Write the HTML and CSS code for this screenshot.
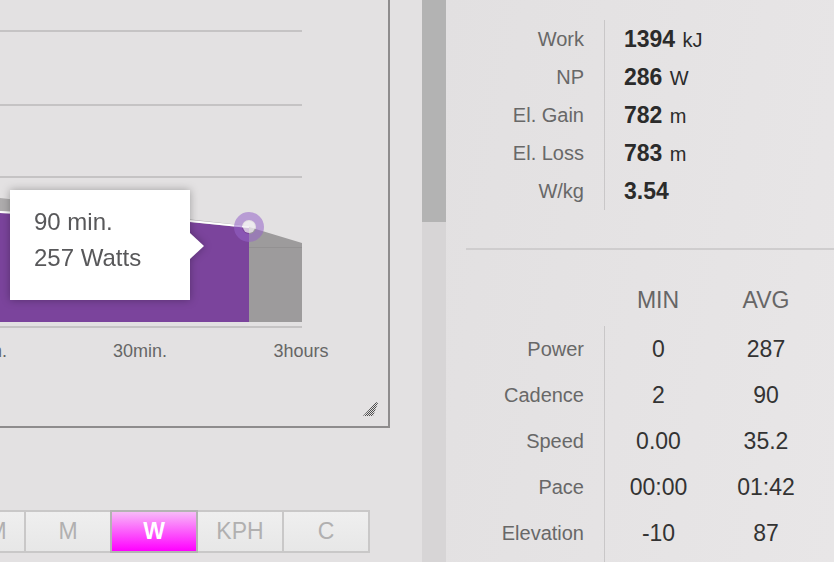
FILE: index.html
```html
<!DOCTYPE html>
<html lang="en">
<head>
  <meta charset="UTF-8">
  <title>Ride Analysis</title>
  <link rel="stylesheet" href="styles.css">
</head>
<body>

  <div class="chart-pane">
    <div class="chart-box">
      <svg class="power-curve" width="388" height="370" viewBox="0 0 388 370">
        <rect class="grid-line" x="0" y="30" width="302" height="2"/>
        <rect class="grid-line" x="0" y="104" width="302" height="2"/>
        <rect class="grid-line" x="0" y="176" width="302" height="2"/>

        <polygon points="0,198 249,226 249,228 0,213" fill="#aeacad"/>
        <polygon points="249,227 302,243 302,322 249,322" fill="#9d9b9c"/>
        <rect x="249" y="247" width="53" height="1" fill="#939192"/>
        <polygon points="0,213 190,222 249,228 249,322 0,322" fill="#7b449c"/>
        <polyline points="0,212 190,221 249,227" fill="none" stroke="#fff" stroke-width="2"/>

        <circle cx="249" cy="227" r="11" fill="none" stroke="rgba(150,100,200,0.55)" stroke-width="8"/>
        <circle cx="249" cy="227" r="6" fill="rgba(240,236,242,0.75)"/>

        <rect class="grid-line" x="0" y="326" width="302" height="2"/>

        <text class="axis-label" x="-20" y="357" text-anchor="middle">10min.</text>
        <text class="axis-label" x="140" y="357" text-anchor="middle">30min.</text>
        <text class="axis-label" x="301" y="357" text-anchor="middle">3hours</text>
      </svg>

      <div class="chart-tooltip">
        <div>90 min.</div>
        <div>257 Watts</div>
      </div>

      <svg class="resize-grip" width="16" height="16" viewBox="0 0 16 16">
        <defs>
          <pattern id="grip-dots" width="2" height="2" patternUnits="userSpaceOnUse">
            <rect width="1" height="1" fill="#4d4d4d"/>
            <rect x="1" y="1" width="1" height="1" fill="#4d4d4d"/>
          </pattern>
        </defs>
        <polygon points="1,16 14,2 16,3 11,16" fill="url(#grip-dots)"/>
      </svg>
    </div>

    <div class="unit-toggle">
      <button class="unit-btn">M</button>
      <button class="unit-btn">M</button>
      <button class="unit-btn active">W</button>
      <button class="unit-btn">KPH</button>
      <button class="unit-btn">C</button>
    </div>
  </div>

  <div class="scroll-track">
    <div class="scroll-thumb"></div>
  </div>

  <div class="stats-pane">
    <div class="totals">
      <div class="stat-label">Work</div>
      <div class="stat-value">1394 <span class="stat-unit">kJ</span></div>
      <div class="stat-label">NP</div>
      <div class="stat-value">286 <span class="stat-unit">W</span></div>
      <div class="stat-label">El. Gain</div>
      <div class="stat-value">782 <span class="stat-unit">m</span></div>
      <div class="stat-label">El. Loss</div>
      <div class="stat-value">783 <span class="stat-unit">m</span></div>
      <div class="stat-label">W/kg</div>
      <div class="stat-value">3.54</div>
    </div>

    <div class="divider"></div>

    <div class="minmax">
      <div class="minmax-head"></div>
      <div class="minmax-head">MIN</div>
      <div class="minmax-head">AVG</div>

      <div class="stat-label">Power</div>
      <div class="minmax-value first">0</div>
      <div class="minmax-value">287</div>

      <div class="stat-label">Cadence</div>
      <div class="minmax-value first">2</div>
      <div class="minmax-value">90</div>

      <div class="stat-label">Speed</div>
      <div class="minmax-value first">0.00</div>
      <div class="minmax-value">35.2</div>

      <div class="stat-label">Pace</div>
      <div class="minmax-value first">00:00</div>
      <div class="minmax-value">01:42</div>

      <div class="stat-label">Elevation</div>
      <div class="minmax-value first last">-10</div>
      <div class="minmax-value">87</div>
    </div>
  </div>

</body>
</html>
```

FILE: styles.css
```css
body {
  margin: 0;
  height: 562px;
  overflow: hidden;
  display: flex;
  font-family: "Liberation Sans", Arial, sans-serif;
  background: #e3e1e2;
}

/* left side: power curve */

.chart-pane {
  width: 422px;
  flex: none;
}

.chart-box {
  position: relative;
  width: 390px;
  height: 428px;
  box-sizing: border-box;
  border-right: 2px solid #8e8c8d;
  border-bottom: 2px solid #8e8c8d;
}

.power-curve {
  display: block;
}

.grid-line {
  fill: #c5c3c4;
}

.axis-label {
  font-size: 18px;
  fill: #666;
}

.chart-tooltip {
  position: absolute;
  left: 10px;
  top: 190px;
  width: 180px;
  height: 110px;
  box-sizing: border-box;
  padding: 14px 0 0 24px;
  background: #fff;
  color: #58585a;
  font-size: 24px;
  line-height: 36px;
  filter: drop-shadow(0 0 4px rgba(0, 0, 0, 0.3));
}

.chart-tooltip::after {
  content: "";
  position: absolute;
  left: 100%;
  top: 43px;
  border-left: 14px solid #fff;
  border-top: 13.5px solid transparent;
  border-bottom: 13.5px solid transparent;
}

.resize-grip {
  position: absolute;
  right: 10px;
  bottom: 10px;
}

.unit-toggle {
  display: flex;
  margin: 82px 0 0 -32px;
}

.unit-btn {
  width: 88px;
  height: 43px;
  flex: none;
  margin: 0 0 0 -2px;
  padding: 0;
  border: 2px solid #c9c8c8;
  background: linear-gradient(#efefef, #e7e7e7);
  color: #b1b0b0;
  font: 23px/39px "Liberation Sans", Arial, sans-serif;
  text-align: center;
}

.unit-btn:first-child {
  width: 58px;
  margin-left: 0;
}

.unit-btn.active {
  position: relative;
  border-color: #b4b3b3;
  background: linear-gradient(#f8baf8, #ff00ff);
  color: #fff;
  font-weight: bold;
}

/* scrollbar */

.scroll-track {
  width: 24px;
  flex: none;
  background: #d7d5d6;
}

.scroll-thumb {
  height: 222px;
  background: #b3b3b3;
}

/* right side: numbers */

.stats-pane {
  flex: 1;
  padding: 20px 0 0 20px;
  background: linear-gradient(100deg, #e2e0e1, #e8e6e7);
}

.totals {
  display: grid;
  grid-template-columns: 138px auto;
  grid-auto-rows: 38px;
  line-height: 38px;
}

.stat-label {
  text-align: right;
  padding-right: 20px;
  color: #686868;
  font-size: 20px;
}

.stat-value {
  border-left: 1px solid #c9c7c8;
  padding-left: 19px;
  color: #2b2b2b;
  font-size: 23px;
  font-weight: bold;
}

.stat-unit {
  font-size: 20px;
  font-weight: normal;
  margin-left: 1px;
}

.divider {
  height: 2px;
  margin-top: 38px;
  background: #cfcdce;
}

.minmax {
  display: grid;
  grid-template-columns: 138px 108px 108px;
  grid-template-rows: 49px repeat(4, 46px) 56px;
  margin-top: 27px;
  line-height: 46px;
}

.minmax-head {
  padding-bottom: 3px;
  font-size: 23px;
  color: #666;
  text-align: center;
}

.minmax-value {
  font-size: 23px;
  color: #333;
  text-align: center;
}

.minmax-value.first {
  border-left: 1px solid #c9c7c8;
}
```
